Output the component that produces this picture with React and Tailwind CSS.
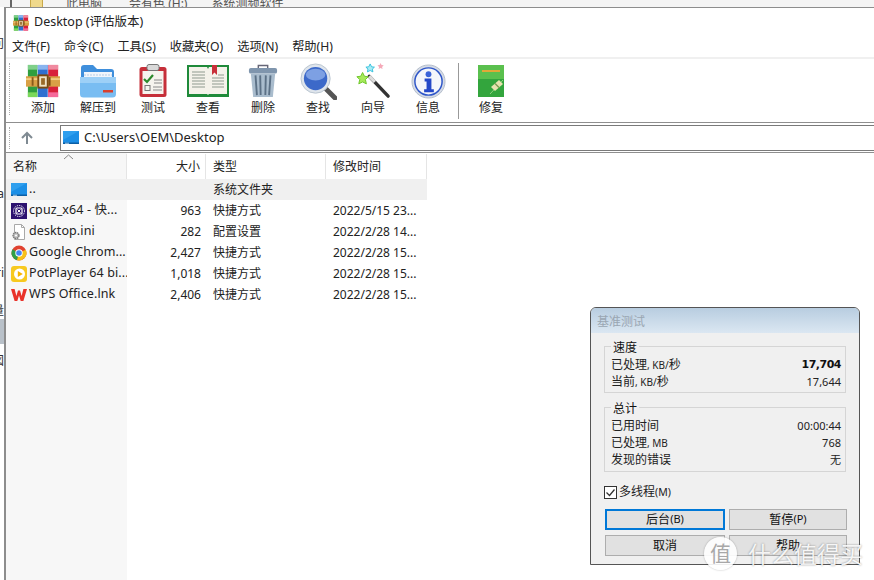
const SANS = "font-['Noto_Sans','Noto_Sans_CJK_SC',sans-serif]";

function Rar({ s = 36 }) {
  return (
    <svg width={s} height={s} viewBox="0 0 36 36">
      <rect x="2" y="1" width="10" height="34" fill="#2f9e3f" />
      <rect x="12.500" y="1" width="10.500" height="34" fill="#2f6fd0" />
      <rect x="23.500" y="1" width="10.500" height="34" fill="#d8203a" />
      <rect x="2" y="1" width="10" height="5" fill="#7fd08a" />
      <rect x="12.500" y="1" width="10.500" height="5" fill="#8ab4ef" />
      <rect x="23.500" y="1" width="10.500" height="5" fill="#f08aa0" />
      <rect x="2" y="30" width="10" height="5" fill="#7bd85a" />
      <rect x="23.500" y="30" width="10.500" height="5" fill="#f56a9a" />
      <rect x="0" y="13" width="36" height="11" fill="#d9a045" />
      <rect x="0" y="15" width="36" height="2" fill="#f0cc80" />
      <rect x="13" y="12" width="10" height="13" fill="#efe3c4" stroke="#7a4a12" strokeWidth="2" />
      <rect x="16" y="15" width="4" height="7" fill="#9a6a28" />
      <rect x="24" y="14" width="2" height="9" fill="#7a4a12" />
      <rect x="6" y="14" width="2" height="9" fill="#8a5a1a" />
    </svg>
  );
}
function Folder() {
  return (
    <svg width="36" height="34" viewBox="0 0 36 34">
      <path d="M1 4a3 3 0 0 1 3-3h9l4 4h14a3 3 0 0 1 3 3v6H1z" fill="#3f8fdc" />
      <rect x="4" y="8" width="28" height="9" fill="#f2f6fb" />
      <path d="M4 11h28M4 14h28" stroke="#b8cde6" strokeDasharray="2 1" />
      <path d="M0 13h36v17a3.500 3.500 0 0 1-3.500 3.500h-29A3.500 3.500 0 0 1 0 30z" fill="#79bdf2" />
      <path d="M0 13h36v6H0z" fill="#9dd0f7" />
      <rect x="23" y="26" width="10" height="2.500" fill="#d8402f" />
    </svg>
  );
}
function Clip() {
  return (
    <svg width="28" height="34" viewBox="0 0 28 34">
      <rect x="0.500" y="3" width="27" height="30" rx="2.500" fill="#c6303a" />
      <rect x="3.500" y="7" width="21" height="23" fill="#f6f4ee" />
      <rect x="8" y="0.500" width="12" height="6" rx="2" fill="#d9d9d9" stroke="#777" />
      <path d="M5 15l3 3 6-7" fill="none" stroke="#2c8a2c" strokeWidth="2.200" />
      <path d="M15 16h8M15 19h8M14 23h9M14 26h9" stroke="#8a8a8a" />
      <rect x="6" y="21.500" width="5" height="5" fill="none" stroke="#777" />
    </svg>
  );
}
function Book() {
  return (
    <svg width="42" height="32" viewBox="0 0 42 32">
      <rect x="0" y="0" width="42" height="32" fill="#1f8a3a" />
      <path d="M2 2h18l1 2 1-2h18v27H22l-1 1-1-1H2z" fill="#f4f2ea" />
      <path d="M5 7h13M5 10h13M5 13h13M5 16h13M5 19h13M5 22h13" stroke="#8f9a8f" />
      <path d="M31 10h6M25 13h12M25 16h12M25 19h12M25 22h12" stroke="#8f9a8f" />
      <path d="M25 0h5v10l-2.500-2.500L25 10z" fill="#c8303a" />
    </svg>
  );
}
function Trash() {
  return (
    <svg width="30" height="36" viewBox="0 0 32 36">
      <path d="M11 4V1.500h10V4" fill="none" stroke="#667" strokeWidth="1.500" />
      <rect x="1" y="4" width="30" height="6" rx="2" fill="#7f95ad" />
      <path d="M3 10h26l-2.500 25h-21z" fill="#a9bccd" />
      <path d="M8 12l1.500 21M13 12l.5 21M19 12l-.5 21M24 12l-1.500 21" stroke="#5c7186" strokeWidth="2" />
    </svg>
  );
}
function Search() {
  return (
    <svg width="37" height="37" viewBox="0 0 38 38">
      <path d="M25 25l11 11" stroke="#555" strokeWidth="5" strokeLinecap="round" />
      <circle cx="16" cy="16" r="15" fill="#dfe5ec" stroke="#b9c4d0" />
      <circle cx="16" cy="16" r="12" fill="#3c69c9" />
      <ellipse cx="16" cy="12" rx="10" ry="6" fill="#7da0e3" />
    </svg>
  );
}
function Wand() {
  return (
    <svg width="36" height="36" viewBox="0 0 38 38">
      <path d="M15 14l20 21" stroke="#333" strokeWidth="3.500" strokeLinecap="round" />
      <path d="M15 14l6 6" stroke="#ddd" strokeWidth="3.500" />
      <path d="M8 10l2 4 4 .5-3 3 1 4.500-4-2-4 2 1-4.500-3-3 4-.5z" fill="#a6ea5a" stroke="#6cc528" />
      <path d="M16 1l1.500 3 3 .4-2.200 2 .6 3-2.900-1.500-2.900 1.500.6-3-2.200-2 3-.4z" fill="#a8ecf6" stroke="#33c0dc" />
      <path d="M27 0l1 2.200 2.300.3-1.700 1.600.5 2.300-2.100-1.200-2.100 1.200.5-2.300-1.700-1.600 2.300-.3z" fill="#f5a9b8" />
    </svg>
  );
}
function Info() {
  return (
    <svg width="35" height="35" viewBox="0 0 36 36">
      <circle cx="18" cy="18" r="17" fill="#d5dbe6" stroke="#b4bdca" />
      <circle cx="18" cy="18" r="14" fill="#f4f6fb" stroke="#2d55c8" strokeWidth="1.500" />
      <circle cx="18" cy="10.500" r="3" fill="#3a63d8" />
      <path d="M14 15h7v11h2.500v3h-10v-3H16v-8h-2z" fill="#2448c8" />
    </svg>
  );
}
function Repair() {
  return (
    <svg width="26" height="32" viewBox="0 0 26 32">
      <rect x="0" y="0" width="26" height="32" fill="#33a53d" />
      <rect x="0" y="0" width="26" height="14" fill="#5ac04e" />
      <rect x="4" y="5" width="18" height="2" fill="#e0a838" />
      <path d="M12 29l13-14" stroke="#8fcf7c" />
      <path d="M13 22l8-7 4 4-8 7z" fill="#e8e2b0" />
      <path d="M17 18.500l4 4" stroke="#7d9a50" strokeWidth="1.500" />
    </svg>
  );
}
function ThisPC() {
  return (
    <svg width="16" height="13" viewBox="0 0 16 13">
      <rect x="0" y="0" width="16" height="13" fill="#1c8fe6" />
      <path d="M0 0h16L0 9z" fill="#2f9fee" />
      <rect x="0" y="11.500" width="16" height="1.500" fill="#0b5fa5" />
      <rect x="2" y="11.800" width="4" height="0.800" fill="#cfe8fb" />
    </svg>
  );
}
function CpuZ() {
  return (
    <svg width="16" height="16" viewBox="0 0 16 16">
      <rect width="16" height="16" fill="#2c1270" />
      <circle cx="8" cy="8" r="5.500" fill="none" stroke="#fff" strokeDasharray="1.300 1" />
      <rect x="5" y="5" width="6" height="6" rx="1" fill="none" stroke="#fff" strokeWidth="1.200" />
      <path d="M6.500 6.500l3 3M9.500 6.500l-3 3" stroke="#fff" />
    </svg>
  );
}
function IniFile() {
  return (
    <svg width="16" height="16" viewBox="0 0 16 16">
      <path d="M3.500.5h7l3 3v12h-10z" fill="#fff" stroke="#a8a8a8" />
      <path d="M10.500.5v3h3" fill="none" stroke="#a8a8a8" />
      <circle cx="5" cy="11.500" r="3" fill="#bbb" stroke="#777" strokeDasharray="1.500 .6" strokeWidth="1.300" />
      <circle cx="5" cy="11.500" r="1" fill="#fff" />
    </svg>
  );
}
function Chrome() {
  return (
    <svg width="16" height="16" viewBox="0 0 16 16">
      <circle cx="8" cy="8" r="7.500" fill="#e0412f" />
      <path d="M8 8L1.500 4.200A7.500 7.500 0 0 0 6 15.200z" fill="#2f9f48" />
      <path d="M8 8l6.800-3.200A7.500 7.500 0 0 1 6 15.200z" fill="#f6c117" />
      <circle cx="8" cy="8" r="3.700" fill="#fff" />
      <circle cx="8" cy="8" r="2.800" fill="#4285f4" />
    </svg>
  );
}
function Pot() {
  return (
    <svg width="16" height="16" viewBox="0 0 16 16">
      <rect width="16" height="16" rx="3" fill="#f7c91f" />
      <circle cx="8.500" cy="8" r="5.500" fill="#fff" />
      <path d="M6.800 5l5 3-5 3z" fill="#f7b500" />
    </svg>
  );
}
function Wps() {
  return (
    <svg width="16" height="14" viewBox="0 0 16 14">
      <path d="M0 1h3.600L5.400 8 7 2.500h2L10.600 8l1.800-7H16l-3.600 12H9.700L8 7.500 6.300 13H3.600z" fill="#e9332a" />
    </svg>
  );
}

function Tool({ icon, label }) {
  return (
    <div className="flex flex-col items-center w-[55px]">
      <div className="h-[36px] flex items-center justify-center">{icon}</div>
      <span className="mt-[1px] text-[12px] leading-[16px] text-[#222]">{label}</span>
    </div>
  );
}

const rows = [
  [<ThisPC />, "..", "", "系统文件夹", ""],
  [<CpuZ />, "cpuz_x64 - 快...", "963", "快捷方式", "2022/5/15 23..."],
  [<IniFile />, "desktop.ini", "282", "配置设置", "2022/2/28 14..."],
  [<Chrome />, "Google Chrom...", "2,427", "快捷方式", "2022/2/28 15..."],
  [<Pot />, "PotPlayer 64 bi...", "1,018", "快捷方式", "2022/2/28 15..."],
  [<Wps />, "WPS Office.lnk", "2,406", "快捷方式", "2022/2/28 15..."],
];

function GroupBox({ title, children, h }) {
  return (
    <div className={`relative border border-[#d5d5d5] ${h} pl-[6px] pr-[4px] pt-[9px]`}>
      <span className="absolute left-[6px] top-[-7px] bg-[#f0f0f0] px-[2px] text-[12px] leading-[16px] text-[#111]">{title}</span>
      {children}
    </div>
  );
}
function Stat({ k, unit, tail, v, bold }) {
  return (
    <div className="flex justify-between h-[17px] items-center text-[12px] leading-[17px] text-[#222]">
      <span>
        {k}
        {unit && <span className="text-[10px]">{unit}</span>}
        {tail}
      </span>
      <span className={bold ? "font-bold text-[#111] font-['DejaVu_Sans',sans-serif] text-[11px] tracking-[-0.5px]" : "text-[11px]"}>{v}</span>
    </div>
  );
}
function Btn({ children, hot, primary }) {
  return (
    <div className={`flex h-[21px] items-center justify-center bg-[#e1e1e1] text-[12px] text-[#111] ${primary ? "border-2 border-[#0078d7]" : "border border-[#adadad]"}`}>
      {children}
      {hot && <span className="text-[11px]">{hot}</span>}
    </div>
  );
}
function Sliver({ children, className = "" }) {
  return (
    <div className={`w-[4px] h-[14px] flex justify-end overflow-hidden whitespace-nowrap text-[12px] leading-[14px] text-[#333] ${className}`}>
      {children}
    </div>
  );
}

export default function App() {
  return (
    <div className={`relative w-[874px] h-[580px] overflow-hidden bg-white ${SANS}`}>
      {/* strip of the window behind */}
      <div className="relative h-[7px] flex items-end overflow-hidden bg-[#f4f4f4] pl-[30px] text-[12px] leading-[7px] text-[#555]">
        <div className="absolute left-[10px] top-0 w-[2px] h-[7px] bg-[#666]" />
        <div className="w-[13px] h-[7px] bg-[#f0d98c] border-x border-[#c9a94a] mr-[23px]" />
        <span className="mr-[27px]">此电脑</span>
        <span className="mr-[24px]">会有色 (H:)</span>
        <span>系统测频软件</span>
      </div>
      <div className="flex h-[573px]">
        <div className="w-[4px] bg-white flex flex-col shrink-0">
          <div className="h-[30px]" />
          <Sliver>问</Sliver>
          <div className="h-[136px]" />
          <Sliver>a</Sliver>
          <div className="h-[65px]" />
          <Sliver>ri</Sliver>
          <div className="h-[24px]" />
          <Sliver>量</Sliver>
          <div className="h-[1px]" />
          <div className="h-[25px] bg-[#b9c1c9]" />
          <div className="h-[10px]" />
          <Sliver>図</Sliver>
        </div>
        <div className="flex-1 flex flex-col border-l-2 border-t border-[#8d8d8d] bg-white min-w-0">
          {/* title */}
          <div className="h-[27px] pt-[2px] flex items-center gap-[5px] pl-[7px] shrink-0">
            <Rar s={16} />
            <span className="text-[12.500px] text-[#222]">Desktop (评估版本)</span>
          </div>
          {/* menu */}
          <div className="h-[22px] pt-[2px] flex items-center gap-[14px] pl-[6px] text-[12.200px] text-[#222] shrink-0">
            {["文件(F)", "命令(C)", "工具(S)", "收藏夹(O)", "选项(N)", "帮助(H)"].map((m) => (
              <span key={m}>{m}</span>
            ))}
          </div>
          {/* toolbar */}
          <div className="h-[66px] flex items-start border-t-2 border-b border-t-[#f0f0f0] border-b-[#8f8f8f] pt-[4px] shrink-0">
            <div className="w-[4px] ml-[3px] mr-[2.500px] h-[52px] border-l border-dotted border-[#aaa]" />
            <Tool label="添加" icon={<Rar s={34} />} />
            <Tool label="解压到" icon={<Folder />} />
            <Tool label="测试" icon={<Clip />} />
            <Tool label="查看" icon={<Book />} />
            <Tool label="删除" icon={<Trash />} />
            <Tool label="查找" icon={<Search />} />
            <Tool label="向导" icon={<Wand />} />
            <Tool label="信息" icon={<Info />} />
            <div className="w-px h-[56px] bg-[#999] ml-[2.500px] mr-[18px]" />
            <div className="flex flex-col items-center w-[28px]">
              <div className="h-[36px] flex items-center justify-center"><Repair /></div>
              <span className="mt-[1px] text-[12px] leading-[16px] text-[#222]">修复</span>
            </div>
          </div>
          {/* address */}
          <div className="h-[30px] flex items-center shrink-0 border-b border-[#8f8f8f]">
            <div className="w-[40px] ml-[3px] flex items-center h-full">
              <span className="w-[4px] h-[22px] border-l border-dotted border-[#aaa]" />
              <svg className="ml-[7px]" width="14" height="14" viewBox="0 0 14 14">
                <path d="M7 13V2M2 7l5-5 5 5" fill="none" stroke="#7f8a92" strokeWidth="2" />
              </svg>
            </div>
            <div className="flex-1 h-[26px] flex items-center gap-[5px] pl-[2px] border border-[#7a7a7a] border-r-0 ml-[11px] text-[13px] text-[#222]">
              <ThisPC />
              <span>C:\Users\OEM\Desktop</span>
            </div>
          </div>
          {/* list */}
          <div className="flex-1 flex min-h-0">
            <div className="w-[121px] bg-[#f7f7f7] shrink-0" />
          </div>
        </div>
      </div>

      {/* file list over the side panel */}
      <div className="absolute left-[6px] top-[154px] w-[421px] text-[12px] text-[#222]">
        <div className="relative grid grid-cols-[121px_79px_120px_101px] h-[25px] items-center">
          <span className="pl-[7px] h-full flex items-center border-r border-[#e5e5e5]">名称</span>
          <span className="pr-[5px] text-right h-full flex items-center justify-end border-r border-[#e5e5e5]">大小</span>
          <span className="pl-[7px] h-full flex items-center border-r border-[#e5e5e5]">类型</span>
          <span className="pl-[7px] h-full flex items-center border-r border-[#e5e5e5]">修改时间</span>
          <svg className="absolute left-[57px] top-0" width="11" height="6" viewBox="0 0 11 6">
            <path d="M1 5l4.500-4L10 5" fill="none" stroke="#888" />
          </svg>
        </div>
        {rows.map(([icon, name, size, type, date], i) => (
          <div key={i} className={`grid grid-cols-[121px_79px_120px_101px] h-[21px] items-center ${i === 0 ? "bg-[#f0f0f0]" : ""}`}>
            <div className="flex items-center gap-[2px] pl-[5px] overflow-hidden whitespace-nowrap">
              <span className="w-[16px] flex justify-center shrink-0">{icon}</span>
              <span className="text-[12.500px] tracking-[0.1px]">{name}</span>
            </div>
            <span className="pr-[5px] text-right">{size}</span>
            <span className="pl-[7px]">{type}</span>
            <span className="pl-[7px] whitespace-nowrap">{date}</span>
          </div>
        ))}
      </div>

      {/* benchmark dialog */}
      <div className="absolute left-[590px] top-[307px] w-[270px] h-[258px] bg-[#f0f0f0] border border-[#555] rounded-t-[6px] overflow-hidden">
        <div className="h-[25px] pt-[2px] flex items-center pl-[6px] bg-gradient-to-b from-[#b8cde0] to-[#dbe7f2] text-[12px] text-[#9aa6b2]">
          基准测试
        </div>
        <div className="px-[13px] pt-[13px]">
          <GroupBox title="速度" h="h-[47px]">
            <Stat k="已处理" unit=", KB/" tail="秒" v="17,704" bold />
            <Stat k="当前" unit=", KB/" tail="秒" v="17,644" />
          </GroupBox>
          <div className="h-[14px]" />
          <GroupBox title="总计" h="h-[65px]">
            <Stat k="已用时间" v="00:00:44" />
            <Stat k="已处理" unit=", MB" v="768" />
            <Stat k="发现的错误" v="无" />
          </GroupBox>
          <label className="flex items-center gap-[1px] mt-[13px] h-[14px] text-[12px] text-[#222]">
            <svg width="13" height="13" viewBox="0 0 13 13">
              <rect x="0.500" y="0.500" width="12" height="12" fill="#fff" stroke="#333" />
              <path d="M2.500 6.500l3 3 5-6" fill="none" stroke="#333" strokeWidth="1.300" />
            </svg>
            <span className="ml-[1px]">多线程<span className="text-[10.500px]">(M)</span></span>
          </label>
          <div className="grid grid-cols-[120px_118px] gap-x-[4px] gap-y-[5px] mt-[10px] w-[242px] ml-[1px]">
            <Btn primary hot="(B)">后台</Btn>
            <Btn hot="(P)">暂停</Btn>
            <Btn>取消</Btn>
            <Btn>帮助</Btn>
          </div>
        </div>
      </div>

      {/* watermark */}
      <div className="absolute left-[704px] top-[537px] flex items-center gap-[11px]">
        <div className="w-[33px] h-[33px] rounded-full bg-white/90 shadow-[0_0_2px_rgba(0,0,0,0.3)] flex items-center justify-center text-[#a8a8a8] text-[21px] leading-none">值</div>
        <span className="text-[23px] leading-[30px] text-white/90 [text-shadow:0_0_2px_rgba(0,0,0,0.45)]">什么值得买</span>
      </div>
    </div>
  );
}
